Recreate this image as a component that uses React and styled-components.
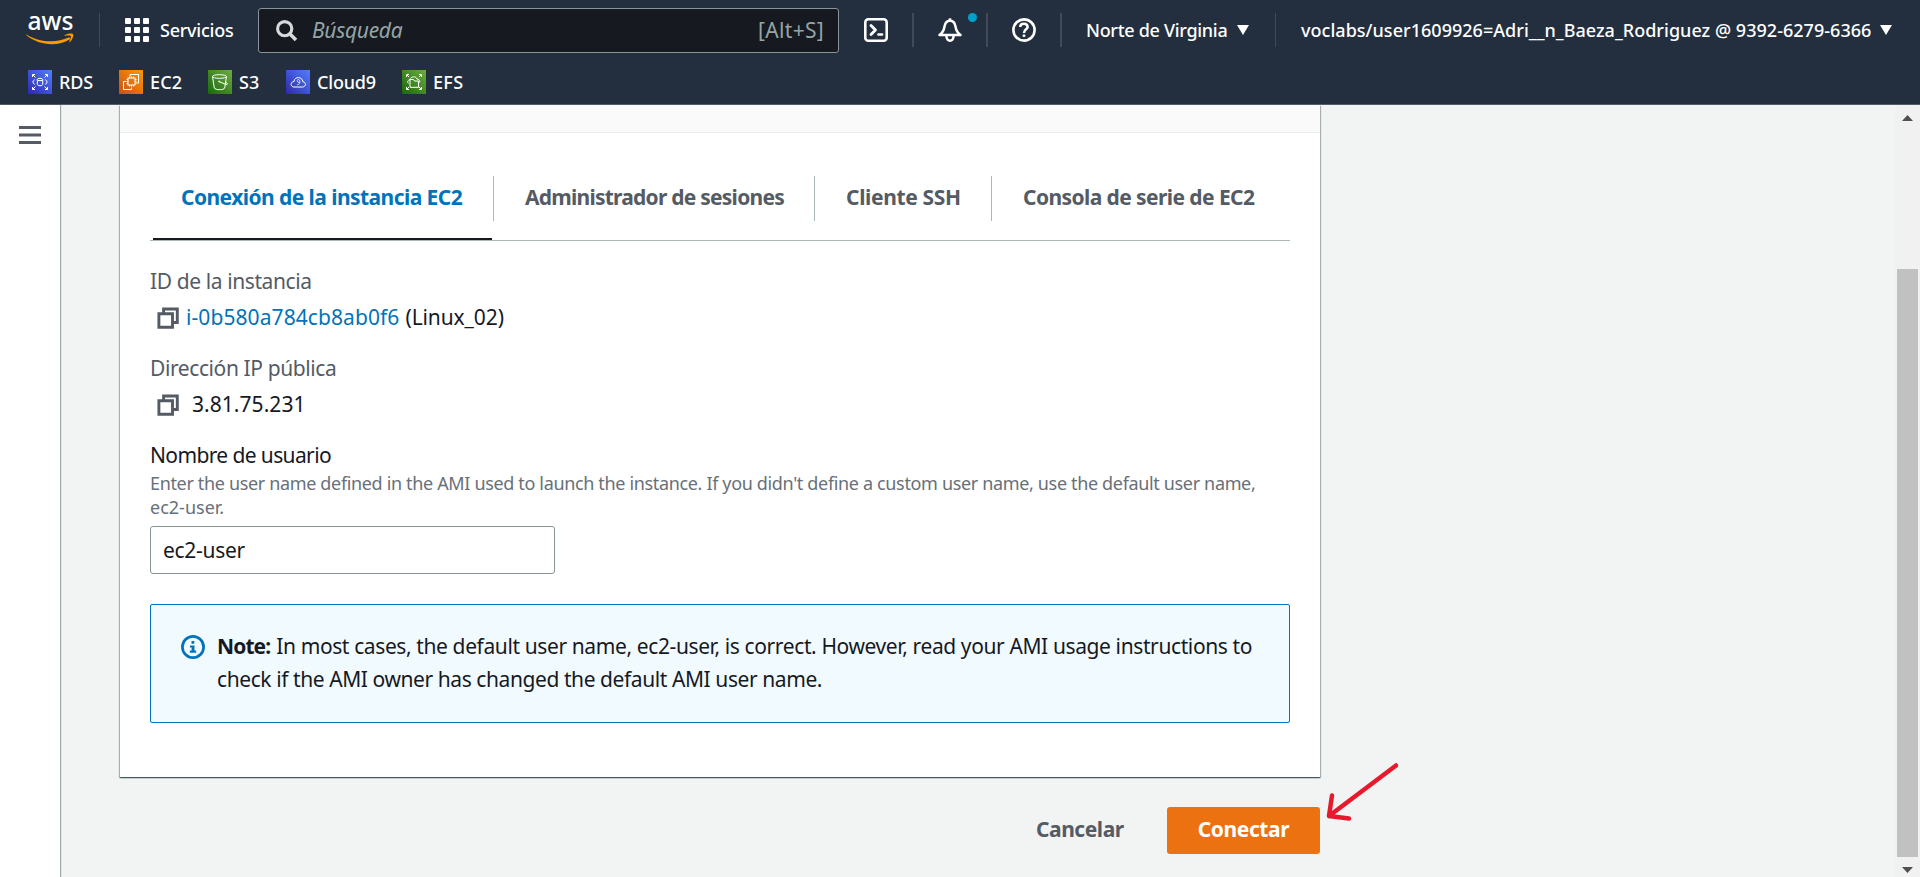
import React from 'react';
import styled, { createGlobalStyle } from 'styled-components';

const GlobalStyle = createGlobalStyle`
  * { box-sizing: border-box; }
  body {
    margin: 0;
    overflow: hidden;
    background: #f2f3f3;
    color: #16191f;
    font-family: 'Noto Sans', 'Open Sans', sans-serif;
    font-size: 21px;
  }
  svg { display: block; flex: none; }
`;

const Page = styled.div`
  height: 877px;
  display: flex;
  flex-direction: column;
  overflow: hidden;
`;

const Label = styled.span`
  white-space: nowrap;
  letter-spacing: ${(p) => p.$ls || 0}px;
`;

/* ---------- header ---------- */
const Header = styled.header`
  height: 105px;
  flex: none;
  background: #232f3e;
  border-bottom: 1px solid #545b6b;
  color: #fff;
  font-size: 18px;
  font-weight: 500;
`;

const TopBar = styled.div`
  height: 60px;
  display: flex;
  align-items: center;
  padding-left: 26px;
`;

const Divider = styled.span`
  width: ${(p) => p.$w || 1}px;
  height: 34px;
  flex: none;
  background: #424a55;
`;

const LogoLink = styled.div`
  width: 73px;
`;

const ServicesButton = styled.div`
  width: 158px;
  padding-left: 25px;
  display: flex;
  align-items: center;
  gap: 10px;
  line-height: 24px;
  & > span { padding-bottom: 1px; }
`;

const SearchBox = styled.div`
  width: 581px;
  height: 45px;
  margin-top: 1px;
  padding: 0 14px 0 17px;
  display: flex;
  align-items: center;
  background: #16191f;
  border: 1px solid #879596;
  border-radius: 3px;
  color: #95a5a6;
  font-size: 21px;
  font-weight: 400;
`;

const SearchHint = styled.span`
  flex: 1;
  padding: 0 0 2px 14px;
  font-style: italic;
  letter-spacing: -0.3px;
`;

const Shortcut = styled.span`
  padding-bottom: 2px;
  letter-spacing: 0.3px;
`;

const IconCell = styled.div`
  width: ${(p) => p.$w}px;
  height: 34px;
  display: flex;
  align-items: center;
  justify-content: center;
  position: relative;
`;

const Dot = styled.span`
  position: absolute;
  top: 0;
  right: 9px;
  width: 9px;
  height: 9px;
  border-radius: 50%;
  background: #00a1c9;
`;

const Menu = styled.div`
  display: flex;
  align-items: center;
  width: ${(p) => p.$w}px;
  padding-left: ${(p) => p.$left || 24}px;
  gap: ${(p) => p.$gap || 10}px;
  line-height: 24px;
  & > span { padding-bottom: 1px; }
`;

const Favorites = styled.nav`
  display: flex;
  padding: 10px 0 0 28px;
`;

const Favorite = styled.div`
  width: ${(p) => p.$w}px;
  display: flex;
  gap: 7px;
  line-height: 24px;
`;

/* ---------- body ---------- */
const Body = styled.div`
  flex: 1;
  display: flex;
`;

const SideRail = styled.aside`
  width: 60px;
  background: #fff;
  box-shadow: 1px 0 1px rgba(0, 28, 36, 0.35);
  padding: 21px 0 0 19px;
`;

const Main = styled.main`
  flex: 1;
  padding-left: 60px;
`;

const Column = styled.div`
  width: 1200px;
`;

const Card = styled.section`
  height: 672px;
  background: #fff;
  box-shadow: 0 1px 1px 0 rgba(0, 28, 36, 0.5), 1px 1px 1px 0 rgba(0, 28, 36, 0.25), -1px 1px 1px 0 rgba(0, 28, 36, 0.25);
`;

const CardHeader = styled.div`
  height: 28px;
  background: #fafafa;
  border-bottom: 1px solid #eaeded;
`;

const CardBody = styled.div`
  padding: 43px 30px 0;
`;

const Tabs = styled.div`
  display: flex;
  height: 65px;
  border-bottom: 1px solid #aab7b8;
`;

const Tab = styled.div`
  width: ${(p) => p.$w}px;
  height: 64px;
  position: relative;
  color: ${(p) => (p.$active ? '#0073bb' : '#545b64')};
  font-weight: 700;
  ${(p) => p.$active && `
    &::after {
      content: '';
      position: absolute;
      left: 3px;
      right: 2px;
      bottom: 0;
      height: 2px;
      background: #16191f;
    }
  `}
`;

const TabLabel = styled.div`
  height: 45px;
  padding-left: 31px;
  line-height: 42px;
  border-right: ${(p) => (p.$last ? 'none' : '1px solid #aab7b8')};
`;

const Field = styled.div`
  margin-top: ${(p) => p.$top}px;
`;

const FieldName = styled.div`
  line-height: 30px;
  color: ${(p) => (p.$strong ? '#16191f' : '#545b64')};
`;

const FieldValue = styled.div`
  display: flex;
  height: 30px;
  margin-top: 6px;
  padding-left: 7px;
  line-height: 30px;
  & > svg { margin-top: 5px; }
`;

const InstanceLink = styled(Label)`
  margin: 0 6px 0 7px;
  color: #0073bb;
`;

const IpAddress = styled(Label)`
  margin-left: 13px;
`;

const Description = styled.div`
  display: flex;
  flex-direction: column;
  margin-top: 1px;
  color: #687078;
  font-size: 18px;
  line-height: 24px;
`;

const Input = styled.div`
  width: 405px;
  height: 48px;
  margin-top: 7px;
  padding-left: 12px;
  border: 1px solid #879596;
  border-radius: 3px;
  line-height: 46px;
`;

const Alert = styled.div`
  height: 119px;
  margin-top: 30px;
  padding: 25px 0 0 30px;
  display: flex;
  gap: 12px;
  background: #f1faff;
  border: 1px solid #0073bb;
  border-radius: 2px;
  & > svg { margin-top: 5px; }
`;

const AlertText = styled.div`
  display: flex;
  flex-direction: column;
  line-height: 33px;
`;

const AlertLine = styled.div`
  display: flex;
  gap: 6px;
  b { letter-spacing: -0.9px; }
`;

const Actions = styled.div`
  margin-top: 30px;
  display: flex;
  justify-content: flex-end;
  font-weight: 700;
  line-height: 44px;
`;

const Cancel = styled.div`
  width: 131px;
  color: #545b64;
`;

const Connect = styled.div`
  width: 153px;
  height: 47px;
  border-radius: 3px;
  background: #ec7211;
  color: #fff;
  text-align: center;
  position: relative;
`;

const Pointer = styled.svg`
  position: absolute;
  left: 157px;
  top: -46px;
`;

const ScrollTrack = styled.div`
  width: 25px;
  display: flex;
  flex-direction: column;
  align-items: center;
  background: #f1f1f1;
  padding: 10px 0 4px;
`;

const ScrollThumb = styled.div`
  width: 21px;
  height: 588px;
  margin: 148px 0 auto;
  background: #c1c1c1;
`;

/* ---------- drawings ---------- */
const AwsLogo = () => (
  <svg width="50" height="60" viewBox="0 -14 50 60">
    <text x="1.500" y="16" fill="#fff" fontSize="26" fontWeight="500" textLength="46" lengthAdjust="spacingAndGlyphs">aws</text>
    <path d="M.4 20.400C14 29 31 29.100 42.500 23.600C44 22.900 45 24.300 43.600 25.400C32 32.700 13 32 .100 21.100Z" fill="#f90" />
    <path d="M38.500 21.100C41.500 19.400 46 19.100 47 20.100C48 21.500 46.500 25.700 44 28.100C43.500 28.500 43 28.300 43.300 27.700C44.500 25 45.300 22.800 44.700 22C43.700 21.200 41 21.500 38.700 21.700Z" fill="#f90" />
  </svg>
);

const GridIcon = () => (
  <svg width="25" height="24" fill="#fff">
    {[0, 9, 18].map((y) => [0, 9, 18].map((x) => (
      <rect key={`${x}-${y}`} x={x} y={y} width="6" height="6" rx="1" />
    )))}
  </svg>
);

const SearchIcon = () => (
  <svg width="22" height="22" fill="none" stroke="#d5dbdb" strokeWidth="3.100">
    <circle cx="8.700" cy="8.700" r="7.100" />
    <path d="M13.500 13.500L20 20" strokeWidth="3.500" />
  </svg>
);

const ShellIcon = () => (
  <svg width="24" height="24" fill="none" stroke="#fff" strokeWidth="2.600">
    <rect x="1.300" y="1.300" width="21.400" height="21.400" rx="3" />
    <path d="M7 7.500L11.500 12L7 16.500" strokeWidth="2.800" strokeLinejoin="round" strokeLinecap="round" />
    <path d="M14.500 16.500H18" strokeLinecap="round" />
  </svg>
);

const BellIcon = () => (
  <svg width="24" height="24" fill="none" stroke="#fff" strokeWidth="2.500" strokeLinejoin="round">
    <path d="M1.500 17C5 14.500 6 12 6.500 8.500C7 5.500 9 3 12 2.600C15 3 17 5.500 17.500 8.500C18 12 19 14.500 22.500 17Z" />
    <path d="M12 3V.300" />
    <path d="M8.500 18C8 24.300 16 24.300 15.500 18" />
  </svg>
);

const HelpIcon = () => (
  <svg width="24" height="24" fill="none" stroke="#fff" strokeWidth="2.600">
    <circle cx="12" cy="12" r="10.600" />
    <path d="M8.200 9C8.300 4.700 15.600 4.900 15.600 9C15.600 11.500 12 11.300 12 15" strokeWidth="2.500" />
    <path d="M10.700 17.700H13.300" strokeWidth="2.500" />
  </svg>
);

const Caret = () => (
  <svg width="12" height="10"><path d="M0 0H12L6 10Z" fill="#fff" /></svg>
);

const glyphs = {
  RDS: (
    <>
      <path d="M4.500 7V4.500H7M5 5L7.500 7.500M17 4.500H19.500V7M19 5L16.500 7.500M4.500 17V19.500H7M5 19L7.500 16.500M17 19.500H19.500V17M19 19L16.500 16.500" />
      <ellipse cx="12" cy="9.500" rx="2.700" ry="1.200" />
      <path d="M9.300 9.500V14.500C9.300 16.200 14.700 16.200 14.700 14.500V9.500M6.500 9.500L4.700 12L6.500 14.500M17.500 9.500L19.300 12L17.500 14.500" />
    </>
  ),
  EC2: (
    <>
      <path d="M11 6.500V4.500H19.500V13H17.500M7 11.500H4.500V19.500H12.500V17.500" />
      <rect x="9" y="8" width="7" height="7" />
      <path d="M10.500 6.500V8M12.500 6.500V8M14.500 6.500V8M10.500 15V16.500M12.500 15V16.500M14.500 15V16.500M7.500 9.500H9M7.500 11.500H9M7.500 13.500H9M16 9.500H17.500M16 11.500H17.500M16 13.500H17.500" />
    </>
  ),
  S3: (
    <>
      <ellipse cx="11.500" cy="6.500" rx="7" ry="1.800" />
      <path d="M4.500 6.500L6.300 18C7 20.200 16 20.200 16.700 18L18.500 6.500M11.500 11.800L17.500 14.300C20 15.200 20 13.300 17.800 12.200" />
      <circle cx="11.200" cy="11.500" r=".600" />
    </>
  ),
  Cloud9: (
    <>
      <path d="M8 17H16.500C20.200 16.800 20.500 12.200 16.800 11.600C16.500 6.500 8.500 6 8 11.500C4 11.800 4.300 17 8 17Z" />
      <path d="M13.800 12.300C10.800 13 10.800 9.500 12.500 9.500C14.500 9.500 14.200 14.800 11.300 14.800" strokeWidth=".800" />
    </>
  ),
  EFS: (
    <>
      <path d="M4.500 7V4.500H7M5 5L7 7M17 4.500H19.500V7M19 5L17 7M4.500 17V19.500H7M5 19L7 17M17 19.500H19.500V17M19 19L17 17" />
      <path d="M8 17.300H16.500V11H12.500L11.500 9.500H8ZM6.500 13.500C4.800 12 6 10 7.800 9.800C8.500 6 14.500 6 15 9C17.500 9 18.300 11.500 17.500 12.500" />
    </>
  ),
};

const Glyph = ({ name, from, to }) => (
  <svg width="24" height="24">
    <defs>
      <linearGradient id={`bg-${name}`} x1="0" y1="1" x2="1" y2="0">
        <stop offset="0" stopColor={from} />
        <stop offset="1" stopColor={to} />
      </linearGradient>
    </defs>
    <rect width="24" height="24" fill={`url(#bg-${name})`} />
    <g fill="none" stroke="#fff" strokeWidth="1">{glyphs[name]}</g>
  </svg>
);

const MenuIcon = () => (
  <svg width="22" height="18" fill="#545b64">
    <rect width="22" height="3" />
    <rect y="7.500" width="22" height="3" />
    <rect y="15" width="22" height="3" />
  </svg>
);

const CopyIcon = () => (
  <svg width="22" height="22" fill="none" stroke="#545b64" strokeWidth="2.900">
    <path d="M1.900 6.800H15.500V20.300H1.900Z" />
    <path d="M6.600 6.500V2H20.300V15.500H15.500" />
  </svg>
);

const InfoIcon = () => (
  <svg width="24" height="24">
    <circle cx="12" cy="12" r="10.600" fill="none" stroke="#0073bb" strokeWidth="2.700" />
    <path d="M10.500 6H13.300V8.700H10.500ZM9 10.500H13.500V15.500H15.200V17.700H8.800V15.500H10.600V12.500H9Z" fill="#0073bb" />
  </svg>
);

const favorites = [
  { name: 'RDS', w: 91, ls: -0.1, from: '#2e27ad', to: '#527fff' },
  { name: 'EC2', w: 89, ls: 0.1, from: '#c8511b', to: '#ff9900' },
  { name: 'S3', w: 78, ls: 0, from: '#1b660f', to: '#6cae3e' },
  { name: 'Cloud9', w: 116, ls: -0.2, from: '#2e27ad', to: '#527fff' },
  { name: 'EFS', w: 80, ls: 0.3, from: '#1b660f', to: '#6cae3e' },
];

const tabs = [
  { label: 'Conexión de la instancia EC2', w: 344, ls: -0.56, active: true },
  { label: 'Administrador de sesiones', w: 321, ls: -0.76 },
  { label: 'Cliente SSH', w: 177, ls: -0.35 },
  { label: 'Consola de serie de EC2', w: 298, ls: -0.58 },
];

export default function App() {
  return (
    <Page>
      <GlobalStyle />
      <Header>
        <TopBar>
          <LogoLink><AwsLogo /></LogoLink>
          <Divider />
          <ServicesButton><GridIcon /><Label $ls={-0.25}>Servicios</Label></ServicesButton>
          <SearchBox>
            <SearchIcon />
            <SearchHint>Búsqueda</SearchHint>
            <Shortcut>[Alt+S]</Shortcut>
          </SearchBox>
          <IconCell $w={73}><ShellIcon /></IconCell>
          <Divider $w={2} />
          <IconCell $w={72}><BellIcon /><Dot /></IconCell>
          <Divider $w={2} />
          <IconCell $w={72}><HelpIcon /></IconCell>
          <Divider $w={2} />
          <Menu $w={213}><Label $ls={-0.3}>Norte de Virginia</Label><Caret /></Menu>
          <Divider />
          <Menu $w={641} $left={25} $gap={9}>
            <Label $ls={0.03}>voclabs/user1609926=Adri__n_Baeza_Rodriguez @ 9392-6279-6366</Label>
            <Caret />
          </Menu>
        </TopBar>
        <Favorites>
          {favorites.map((f) => (
            <Favorite key={f.name} $w={f.w}>
              <Glyph name={f.name} from={f.from} to={f.to} />
              <Label $ls={f.ls}>{f.name}</Label>
            </Favorite>
          ))}
        </Favorites>
      </Header>
      <Body>
        <SideRail><MenuIcon /></SideRail>
        <Main>
          <Column>
            <Card>
              <CardHeader />
              <CardBody>
                <Tabs>
                  {tabs.map((t, i) => (
                    <Tab key={t.label} $w={t.w} $active={t.active}>
                      <TabLabel $last={i === tabs.length - 1}>
                        <Label $ls={t.ls}>{t.label}</Label>
                      </TabLabel>
                    </Tab>
                  ))}
                </Tabs>
                <Field $top={25}>
                  <FieldName><Label $ls={-0.4}>ID de la instancia</Label></FieldName>
                  <FieldValue>
                    <CopyIcon />
                    <InstanceLink $ls={0.08}>i-0b580a784cb8ab0f6</InstanceLink>
                    <Label $ls={-0.1}>(Linux_02)</Label>
                  </FieldValue>
                </Field>
                <Field $top={21}>
                  <FieldName><Label $ls={-0.4}>Dirección IP pública</Label></FieldName>
                  <FieldValue>
                    <CopyIcon />
                    <IpAddress $ls={0.05}>3.81.75.231</IpAddress>
                  </FieldValue>
                </Field>
                <Field $top={21}>
                  <FieldName $strong><Label $ls={-0.62}>Nombre de usuario</Label></FieldName>
                  <Description>
                    <Label $ls={-0.345}>Enter the user name defined in the AMI used to launch the instance. If you didn't define a custom user name, use the default user name,</Label>
                    <Label $ls={0}>ec2-user.</Label>
                  </Description>
                  <Input><Label $ls={-0.3}>ec2-user</Label></Input>
                </Field>
                <Alert>
                  <InfoIcon />
                  <AlertText>
                    <AlertLine>
                      <b>Note:</b>
                      <Label $ls={-0.39}>In most cases, the default user name, ec2-user, is correct. However, read your AMI usage instructions to</Label>
                    </AlertLine>
                    <Label $ls={-0.42}>check if the AMI owner has changed the default AMI user name.</Label>
                  </AlertText>
                </Alert>
              </CardBody>
            </Card>
            <Actions>
              <Cancel><Label $ls={-0.45}>Cancelar</Label></Cancel>
              <Connect>
                <Label $ls={-0.4}>Conectar</Label>
                <Pointer width="80" height="64" fill="none" stroke="#e8192c" strokeWidth="4.500" strokeLinecap="round" strokeLinejoin="round">
                  <path d="M72 4.500L5 55M8 34.500L5 55L25 57.500" />
                </Pointer>
              </Connect>
            </Actions>
          </Column>
        </Main>
        <ScrollTrack>
          <svg width="11" height="6"><path d="M0 6H11L5.500 0Z" fill="#505050" /></svg>
          <ScrollThumb />
          <svg width="11" height="6"><path d="M0 0H11L5.500 6Z" fill="#505050" /></svg>
        </ScrollTrack>
      </Body>
    </Page>
  );
}
